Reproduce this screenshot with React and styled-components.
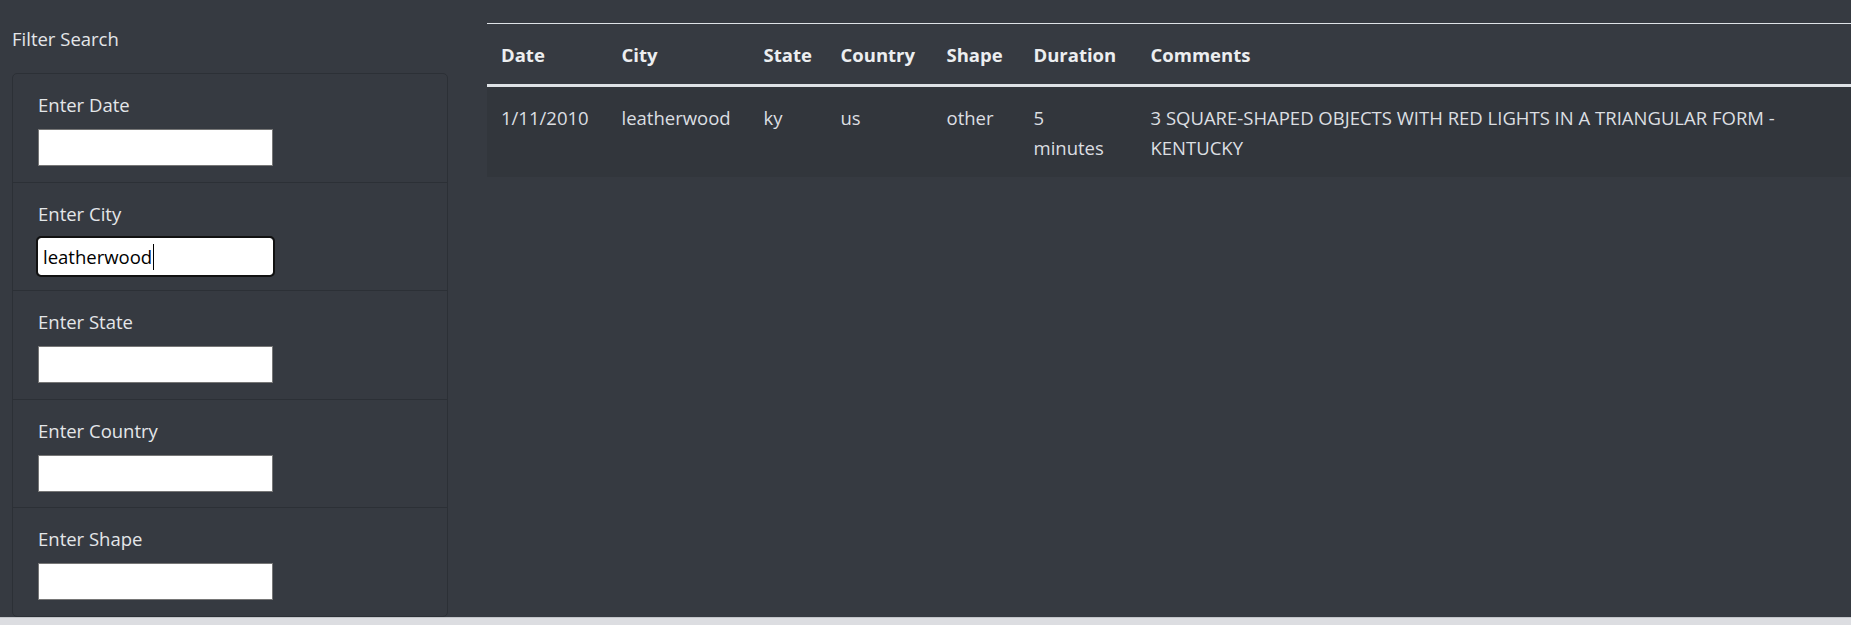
import styled, { createGlobalStyle, css } from "styled-components";

const GlobalStyle = createGlobalStyle`
  html, body {
    margin: 0;
    padding: 0;
    background: #363a41;
  }
  body {
    font-family: "Open Sans", "Noto Sans", sans-serif;
    overflow: hidden;
  }
`;

const Page = styled.div`
  height: 100vh;
  display: flex;
  flex-direction: column;
`;

const Content = styled.div`
  flex: 1;
  min-height: 0;
  display: flex;
  gap: 39px;
  overflow: hidden;
`;

const Sidebar = styled.aside`
  width: 448px;
  flex-shrink: 0;
  padding-left: 12px;
  box-sizing: border-box;
`;

const SideTitle = styled.div`
  padding-top: 24px;
  margin-bottom: 19px;
  font-size: 18.5px;
  line-height: 30px;
  color: #e4e6e9;
`;

const FilterCard = styled.ul`
  list-style: none;
  margin: 0;
  padding: 0;
  border: 1px solid #2c3036;
  border-radius: 5px;
`;

const FilterItem = styled.li`
  padding: 16px 25px 15.5px;
  & + & {
    border-top: 1px solid #2c3036;
  }
`;

const Label = styled.label`
  display: block;
  font-size: 18.5px;
  line-height: 30px;
  margin-bottom: 9px;
  color: #e4e6e9;
`;

const Field = styled.div`
  position: relative;
  width: 235px;
`;

const Input = styled.input`
  display: block;
  box-sizing: border-box;
  width: 235px;
  height: 37px;
  margin: 0;
  padding: 1px 4px;
  border: 1px solid #767676;
  background: #fff;
  font-family: inherit;
  font-size: 18.5px;
  color: #000;
  ${(p) =>
    p.$focused &&
    css`
      outline: 2px solid #111;
      outline-offset: 0;
      border-radius: 3px;
      border-color: #fff;
    `}
`;

const Caret = styled.span`
  position: absolute;
  left: 115px;
  top: 6px;
  width: 1px;
  height: 26px;
  background: #000;
`;

const Main = styled.main`
  flex: 1;
  min-width: 0;
  padding-top: 23px;
`;

const Table = styled.table`
  width: 100%;
  border-collapse: collapse;
  table-layout: fixed;
  font-size: 18.5px;
  line-height: 30px;
  color: #dcdfe2;
`;

const Th = styled.th`
  box-sizing: border-box;
  width: ${(p) => (p.$w ? `${p.$w}px` : "auto")};
  padding: 16px 14px 14px;
  text-align: left;
  vertical-align: bottom;
  font-weight: 700;
  color: #eceef0;
  border-top: 1px solid #dee2e6;
  border-bottom: 3px solid #dee2e6;
`;

const Row = styled.tr`
  background: #32363c;
`;

const Td = styled.td`
  padding: 16px ${(p) => (p.$narrow ? "34px" : "14px")} 14px 14px;
  vertical-align: top;
`;

const ScrollStrip = styled.div`
  height: 7px;
  flex-shrink: 0;
  background: #dcdde1;
  border-top: 1px solid #c3c5c9;
`;

const filters = [
  { id: "datetime", label: "Enter Date", value: "" },
  { id: "city", label: "Enter City", value: "leatherwood", focused: true },
  { id: "state", label: "Enter State", value: "" },
  { id: "country", label: "Enter Country", value: "" },
  { id: "shape", label: "Enter Shape", value: "" },
];

const columns = [
  { key: "datetime", title: "Date", w: 120.5 },
  { key: "city", title: "City", w: 142 },
  { key: "state", title: "State", w: 77 },
  { key: "country", title: "Country", w: 106 },
  { key: "shape", title: "Shape", w: 87 },
  { key: "durationMinutes", title: "Duration", w: 117, narrow: true },
  { key: "comments", title: "Comments" },
];

const sightings = [
  {
    datetime: "1/11/2010",
    city: "leatherwood",
    state: "ky",
    country: "us",
    shape: "other",
    durationMinutes: "5 minutes",
    comments:
      "3 SQUARE-SHAPED OBJECTS WITH RED LIGHTS IN A TRIANGULAR FORM - KENTUCKY",
  },
];

function App() {
  return (
    <Page>
      <GlobalStyle />
      <Content>
        <Sidebar>
          <SideTitle>Filter Search</SideTitle>
          <FilterCard>
            {filters.map((f) => (
              <FilterItem key={f.id}>
                <Label htmlFor={f.id}>{f.label}</Label>
                <Field>
                  <Input
                    id={f.id}
                    type="text"
                    defaultValue={f.value}
                    $focused={f.focused}
                  />
                  {f.focused && <Caret />}
                </Field>
              </FilterItem>
            ))}
          </FilterCard>
        </Sidebar>
        <Main>
          <Table>
            <thead>
              <tr>
                {columns.map((c) => (
                  <Th key={c.key} $w={c.w}>
                    {c.title}
                  </Th>
                ))}
              </tr>
            </thead>
            <tbody>
              {sightings.map((s, i) => (
                <Row key={i}>
                  {columns.map((c) => (
                    <Td key={c.key} $narrow={c.narrow}>
                      {s[c.key]}
                    </Td>
                  ))}
                </Row>
              ))}
            </tbody>
          </Table>
        </Main>
      </Content>
      <ScrollStrip />
    </Page>
  );
}

export default App;
